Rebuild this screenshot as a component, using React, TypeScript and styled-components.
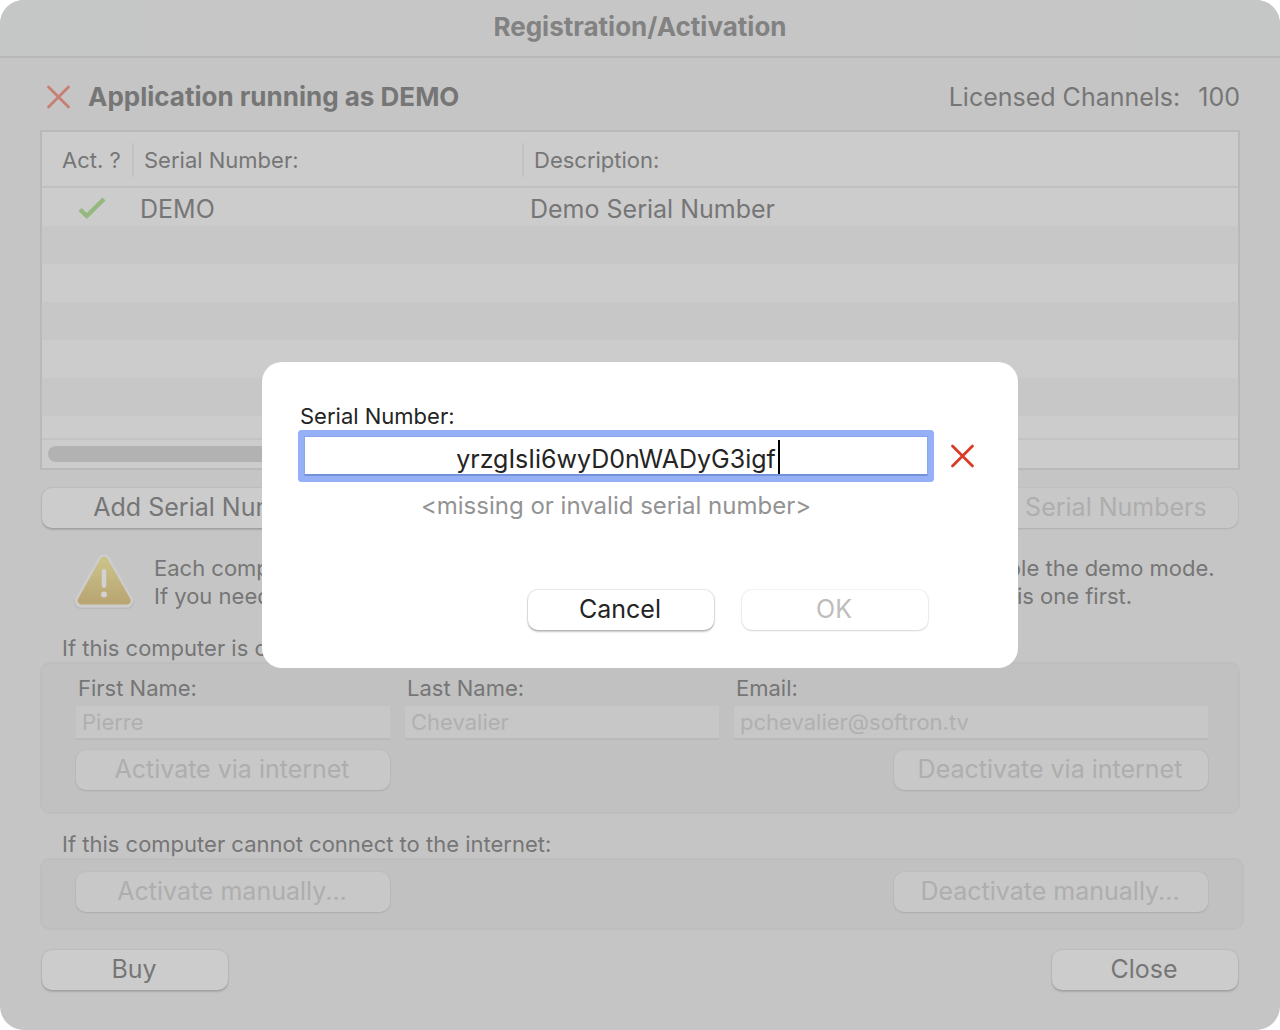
import React, { useState } from "react";
import styled, { createGlobalStyle, css } from "styled-components";

const GlobalStyle = createGlobalStyle`
  *, *::before, *::after { box-sizing: border-box; }
  body {
    margin: 0;
    background: #ffffff;
    font-family: Inter, "Liberation Sans", sans-serif;
    font-size: 22px;
    color: #767676;
  }
  button, input { font-family: inherit; }
`;

const Window = styled.div`
  position: relative;
  display: flex;
  flex-direction: column;
  min-height: 100vh;
  border-radius: 24px;
  background: #c5c5c5;
  overflow: hidden;
`;

const TitleBar = styled.header`
  display: flex;
  align-items: center;
  justify-content: center;
  height: 58px;
  padding-bottom: 2px;
  border-bottom: 2px solid #b8b8b8;
  background: linear-gradient(90deg, #c4c7c5, #c6c6c6 20%, #c6c6c6 80%, #c4c7c5);
`;

const Title = styled.h1`
  margin: 0;
  font-size: 26px;
  line-height: 32px;
  font-weight: 700;
  color: #828282;
`;

const Body = styled.main`
  display: flex;
  flex-direction: column;
  padding: 20px 40px 38px;
`;

const StatusRow = styled.div`
  display: flex;
  align-items: center;
  height: 38px;
  padding-left: 6px;
  font-size: 25px;
  line-height: 32px;
`;

const StatusTitle = styled.h2`
  margin: 0 auto 0 17px;
  font-size: 26px;
  font-weight: 700;
`;

const Channels = styled.p`
  display: flex;
  gap: 18px;
  margin: 0;
`;

const ListFrame = styled.section`
  margin-top: 14px;
  border: 2px solid #b9b9b9;
  background: #cccccc;
`;

const ListView = styled.div`
  height: 306px;
  overflow: hidden;
`;

const Table = styled.table`
  width: 100%;
  border-collapse: separate;
  border-spacing: 0;
  table-layout: fixed;
  text-align: left;
`;

const HeadCell = styled.th<{ $width?: number; $divided?: boolean }>`
  width: ${(p) => (p.$width ? `${p.$width}px` : "auto")};
  height: 56px;
  padding: 2px 0 0;
  border-bottom: 2px solid #c0c0c0;
  font-weight: 400;

  span {
    display: block;
    line-height: 34px;
    padding-left: ${(p) => (p.$divided ? 10 : 20)}px;
    border-left: ${(p) => (p.$divided ? "2px solid #c2c2c2" : "0")};
  }
`;

const Row = styled.tr`
  height: 38px;
  background: #cccccc;
  &:nth-child(even) { background: #c7c7c7; }
`;

const Cell = styled.td`
  padding: 4px 8px 0;
  font-size: 25px;
  line-height: 34px;

  svg { display: block; margin-left: 28px; }
`;

const ScrollTrack = styled.div`
  height: 30px;
  padding: 6px;
  border-top: 2px solid #c3c3c3;
`;

const ScrollThumb = styled.div`
  width: 78%;
  height: 16px;
  border-radius: 8px;
  background: #b2b2b2;
`;

const Split = styled.div<{ $top: number }>`
  display: flex;
  justify-content: space-between;
  margin-top: ${(p) => p.$top}px;
`;

const Indent = styled(Split)`
  padding: 0 2px;
`;

type ButtonProps = { $width?: number; $onSheet?: boolean };

const Button = styled.button<ButtonProps>`
  min-width: ${(p) => p.$width ?? 186}px;
  height: 40px;
  padding: 0 2px 2px 0;
  border: 0;
  border-radius: 10px;
  font-size: 25px;
  line-height: 32px;
  color: #767676;
  background: #cccccc;
  box-shadow: 0 0 1px 1px rgba(0, 0, 0, 0.05), 0 2px 2px rgba(0, 0, 0, 0.14);

  &:disabled {
    color: #aeaeae;
    background: #c8c8c8;
    box-shadow: 0 0 1px 1px rgba(0, 0, 0, 0.02), 0 1px 2px rgba(0, 0, 0, 0.1);
  }

  ${(p) =>
    p.$onSheet &&
    css`
      color: #242424;
      background: #ffffff;
      box-shadow: 0 0 1px 1px rgba(0, 0, 0, 0.1), 0 2px 2px rgba(0, 0, 0, 0.22);
      &:disabled {
        color: #bdbdbd;
        background: #ffffff;
        box-shadow: 0 0 1px 1px rgba(0, 0, 0, 0.05), 0 1px 2px rgba(0, 0, 0, 0.12);
      }
    `}
`;

const Notice = styled.div`
  display: flex;
  align-items: flex-start;
  gap: 18px;
  margin-top: 23px;
  padding-left: 32px;
`;

const NoticeText = styled.p`
  margin: 3px 0 0;
  line-height: 28px;
  white-space: nowrap;
`;

const GroupLabel = styled.h3<{ $top: number }>`
  margin: ${(p) => p.$top}px 0 0 22px;
  font-size: 22px;
  font-weight: 400;
  line-height: 28px;
`;

const Group = styled.section<{ $bottom: number; $outset?: number }>`
  margin-right: -${(p) => p.$outset ?? 0}px;
  padding: 12px ${(p) => 30 + (p.$outset ?? 0)}px ${(p) => p.$bottom}px 34px;
  border: 2px solid #bebebe;
  border-radius: 10px;
  background: #c1c1c1;
`;

const Fields = styled.div`
  display: grid;
  grid-template-columns: 314fr 314fr 474fr;
  gap: 15px;
`;

const Field = styled.div`
  display: flex;
  flex-direction: column;

  label {
    margin-top: -2px;
    padding: 0 0 4px 2px;
    line-height: 28px;
  }
  input {
    width: 100%;
    height: 34px;
    padding: 0 6px;
    border: 0;
    border-bottom: 2px solid #b9b9b9;
    border-radius: 0;
    font-size: 22px;
    color: #b0b0b0;
    background: #c7c7c7;
  }
`;

const Overlay = styled.div`
  position: absolute;
  inset: 0;
  display: flex;
  align-items: center;
  justify-content: center;
`;

const Sheet = styled.form`
  width: 756px;
  padding: 40px 38px 38px;
  border-radius: 20px;
  background: #ffffff;
  color: #242424;
`;

const SheetLabel = styled.label`
  display: block;
  line-height: 28px;
`;

const EntryRow = styled.div`
  display: flex;
  align-items: center;
  gap: 22px;
  margin-top: 6px;
  padding-left: 4px;
`;

const Entry = styled.div`
  position: relative;
  width: 624px;

  input {
    display: block;
    width: 100%;
    height: 40px;
    padding: 7px 0 0;
    border: 1px solid #8aa6ee;
    border-bottom: 2px solid #7591d8;
    outline: 0;
    font-size: 25px;
    text-align: center;
    color: #242424;
    background: #ffffff;
    border-radius: 1px;
    box-shadow: 0 0 0 6px #96b0f8;
  }
`;

const Caret = styled.span`
  position: absolute;
  top: 4px;
  left: calc(50% + 162px);
  width: 2px;
  height: 34px;
  background: #000000;
`;

const Hint = styled.p`
  width: 624px;
  margin: 14px 0 0 4px;
  font-size: 24px;
  line-height: 32px;
  text-align: center;
  color: #939393;
`;

const SheetActions = styled.div`
  display: flex;
  justify-content: flex-end;
  gap: 28px;
  margin-top: 68px;
  padding-right: 52px;
`;

const CrossIcon = ({ color }: { color: string }) => (
  <svg width="25" height="25" viewBox="0 0 25 25" fill="none" stroke={color} strokeWidth="2.8" strokeLinecap="round" aria-hidden="true">
    <path d="M2.5 2 22.5 22M22.5 2 2.5 22" />
  </svg>
);

const CheckIcon = () => (
  <svg width="28" height="24" viewBox="0 0 28 24" fill="none" stroke="#95b87f" strokeWidth="4.4" aria-label="Activated">
    <path d="M2 12.500 8.800 19 26 2" />
  </svg>
);

const WarningIcon = () => (
  <svg width="64" height="60" viewBox="0 0 64 60" aria-hidden="true">
    <defs>
      <linearGradient id="amber" x1="0" y1="0" x2="0" y2="1">
        <stop offset="0" stopColor="#cbc28a" />
        <stop offset="1" stopColor="#baa673" />
      </linearGradient>
    </defs>
    <path d="M32 12 8.500 51.500H55.500Z" fill="#b3b3b3" stroke="#b3b3b3" strokeWidth="13" strokeLinejoin="round" opacity=".6" />
    <path d="M32 9.800 9.300 50H54.700Z" fill="#cdcdcd" stroke="#cdcdcd" strokeWidth="13" strokeLinejoin="round" />
    <path d="M32 9.800 9.700 49.500H54.700Z" fill="url(#amber)" stroke="url(#amber)" strokeWidth="8" strokeLinejoin="round" />
    <path d="M32 20.200V34.800" stroke="#d2d2d2" strokeWidth="4.500" strokeLinecap="round" />
    <circle cx="32" cy="43.500" r="3" fill="#d2d2d2" />
  </svg>
);

const people = [
  { id: "first", label: "First Name:", value: "Pierre" },
  { id: "last", label: "Last Name:", value: "Chevalier" },
  { id: "email", label: "Email:", value: "pchevalier@softron.tv" },
];

export default function App() {
  const [serial, setSerial] = useState("yrzgIsIi6wyD0nWADyG3igf");

  return (
    <>
      <GlobalStyle />
      <Window>
        <TitleBar>
          <Title>Registration/Activation</Title>
        </TitleBar>
        <Body>
          <StatusRow>
            <CrossIcon color="#c77e73" />
            <StatusTitle>Application running as DEMO</StatusTitle>
            <Channels>
              <span>Licensed Channels:</span>
              <span>100</span>
            </Channels>
          </StatusRow>

          <ListFrame>
            <ListView>
              <Table>
                <thead>
                  <tr>
                    <HeadCell $width={90}><span>Act. ?</span></HeadCell>
                    <HeadCell $width={390} $divided><span>Serial Number:</span></HeadCell>
                    <HeadCell $divided><span>Description:</span></HeadCell>
                  </tr>
                </thead>
                <tbody>
                  <Row>
                    <Cell><CheckIcon /></Cell>
                    <Cell>DEMO</Cell>
                    <Cell>Demo Serial Number</Cell>
                  </Row>
                  {Array.from({ length: 6 }, (_, i) => (
                    <Row key={i} aria-hidden="true"><td colSpan={3} /></Row>
                  ))}
                </tbody>
              </Table>
            </ListView>
            <ScrollTrack><ScrollThumb /></ScrollTrack>
          </ListFrame>

          <Indent $top={18}>
            <Button type="button" $width={348}>Add Serial Number...</Button>
            <Button type="button" $width={344} disabled>Remove Serial Numbers</Button>
          </Indent>

          <Notice>
            <WarningIcon />
            <NoticeText>
              Each computer running the software needs its own activated serial number to disable the demo mode.
              <br />
              If you need to move a serial number to another computer, please deactivate it on this one first.
            </NoticeText>
          </Notice>

          <GroupLabel $top={23}>If this computer is connected to the internet:</GroupLabel>
          <Group $bottom={22}>
            <Fields>
              {people.map((f) => (
                <Field key={f.id}>
                  <label htmlFor={f.id}>{f.label}</label>
                  <input id={f.id} defaultValue={f.value} disabled />
                </Field>
              ))}
            </Fields>
            <Split $top={10}>
              <Button type="button" $width={314} disabled>Activate via internet</Button>
              <Button type="button" $width={314} disabled>Deactivate via internet</Button>
            </Split>
          </Group>

          <GroupLabel $top={16}>If this computer cannot connect to the internet:</GroupLabel>
          <Group $bottom={16} $outset={4}>
            <Split $top={0}>
              <Button type="button" $width={314} disabled>Activate manually...</Button>
              <Button type="button" $width={314} disabled>Deactivate manually...</Button>
            </Split>
          </Group>

          <Indent $top={20}>
            <Button type="button">Buy</Button>
            <Button type="button">Close</Button>
          </Indent>
        </Body>

        <Overlay>
          <Sheet role="dialog" aria-label="Serial Number" onSubmit={(e) => e.preventDefault()}>
            <SheetLabel htmlFor="serial">Serial Number:</SheetLabel>
            <EntryRow>
              <Entry>
                <input id="serial" value={serial} onChange={(e) => setSerial(e.target.value)} spellCheck={false} />
                <Caret />
              </Entry>
              <CrossIcon color="#db3b26" />
            </EntryRow>
            <Hint>&lt;missing or invalid serial number&gt;</Hint>
            <SheetActions>
              <Button type="button" $onSheet>Cancel</Button>
              <Button type="submit" $onSheet disabled>OK</Button>
            </SheetActions>
          </Sheet>
        </Overlay>
      </Window>
    </>
  );
}
